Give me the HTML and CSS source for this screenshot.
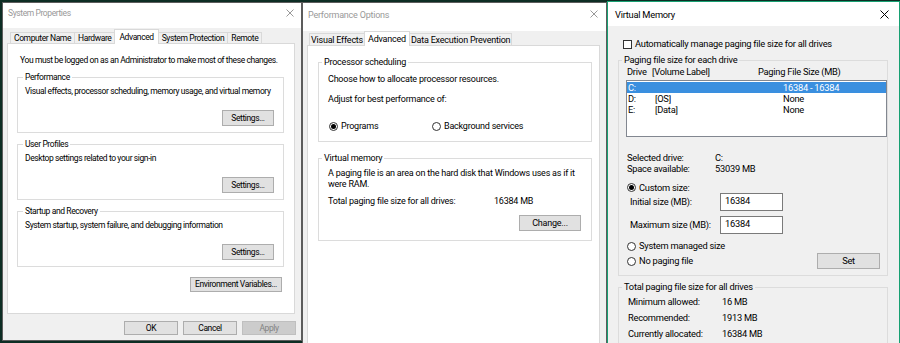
FILE: index.html
```html
<!DOCTYPE html>
<html lang="en">
<head>
    <meta charset="UTF-8">
    <title>System Properties - Virtual Memory</title>
    <link rel="stylesheet" href="styles.css">
</head>
<body>
<div class="desktop">

    <!-- System Properties -->
    <div class="window sysprops">
        <div class="titlebar">
            <span class="title">System Properties</span>
            <svg class="close" width="8" height="8" viewBox="0 0 8 8"><path d="M0.5 0.5L7.5 7.5M7.5 0.5L0.5 7.5"/></svg>
        </div>
        <div class="tabs">
            <span class="tab">Computer Name</span>
            <span class="tab">Hardware</span>
            <span class="tab active">Advanced</span>
            <span class="tab">System Protection</span>
            <span class="tab">Remote</span>
        </div>
        <div class="panel">
            <p class="notice">You must be logged on as an Administrator to make most of these changes.</p>
            <fieldset class="group">
                <legend>Performance</legend>
                <p>Visual effects, processor scheduling, memory usage, and virtual memory</p>
                <div class="actions"><button class="btn settings">Settings...</button></div>
            </fieldset>
            <fieldset class="group">
                <legend>User Profiles</legend>
                <p>Desktop settings related to your sign-in</p>
                <div class="actions"><button class="btn settings">Settings...</button></div>
            </fieldset>
            <fieldset class="group">
                <legend>Startup and Recovery</legend>
                <p>System startup, system failure, and debugging information</p>
                <div class="actions"><button class="btn settings">Settings...</button></div>
            </fieldset>
            <div class="actions env"><button class="btn env-btn">Environment Variables...</button></div>
        </div>
        <div class="footer">
            <button class="btn dlg">OK</button>
            <button class="btn dlg">Cancel</button>
            <button class="btn dlg" disabled>Apply</button>
        </div>
    </div>

    <!-- Performance Options -->
    <div class="window perfopts">
        <div class="titlebar">
            <span class="title">Performance Options</span>
            <svg class="close" width="8" height="8" viewBox="0 0 8 8"><path d="M0.5 0.5L7.5 7.5M7.5 0.5L0.5 7.5"/></svg>
        </div>
        <div class="tabs">
            <span class="tab">Visual Effects</span>
            <span class="tab active">Advanced</span>
            <span class="tab">Data Execution Prevention</span>
        </div>
        <div class="panel">
            <fieldset class="group sched">
                <legend>Processor scheduling</legend>
                <p>Choose how to allocate processor resources.</p>
                <p class="adjust">Adjust for best performance of:</p>
                <div class="radio-row">
                    <span class="option"><span class="radio checked"></span>Programs</span>
                    <span class="option"><span class="radio"></span>Background services</span>
                </div>
            </fieldset>
            <fieldset class="group vm">
                <legend>Virtual memory</legend>
                <p class="vm-text">A paging file is an area on the hard disk that Windows uses as if it were RAM.</p>
                <div class="vm-total">
                    <span>Total paging file size for all drives:</span>
                    <span>16384 MB</span>
                </div>
                <div class="actions"><button class="btn change">Change...</button></div>
            </fieldset>
        </div>
    </div>

    <!-- Virtual Memory -->
    <div class="window vmem active">
        <div class="titlebar">
            <span class="title">Virtual Memory</span>
            <svg class="close" width="9" height="9" viewBox="0 0 9 9"><path d="M0.5 0.5L8.5 8.5M8.5 0.5L0.5 8.5"/></svg>
        </div>
        <div class="vm-body">
            <div class="check-row"><span class="checkbox"></span>Automatically manage paging file size for all drives</div>

            <fieldset class="group drives">
                <legend>Paging file size for each drive</legend>
                <div class="drive-head">
                    <span>Drive</span>
                    <span>[Volume Label]</span>
                    <span>Paging File Size (MB)</span>
                </div>
                <div class="listbox">
                    <div class="drive-row selected"><span>C:</span><span></span><span>16384 - 16384</span></div>
                    <div class="drive-row"><span>D:</span><span>[OS]</span><span>None</span></div>
                    <div class="drive-row"><span>E:</span><span>[Data]</span><span>None</span></div>
                </div>
                <div class="info-grid">
                    <span>Selected drive:</span><span>C:</span>
                    <span>Space available:</span><span>53039 MB</span>
                </div>
                <div class="option custom"><span class="radio checked"></span>Custom size:</div>
                <div class="size-grid">
                    <label for="initSize">Initial size (MB):</label>
                    <input id="initSize" class="textbox" type="text" value="16384">
                    <label for="maxSize">Maximum size (MB):</label>
                    <input id="maxSize" class="textbox" type="text" value="16384">
                </div>
                <div class="option managed"><span class="radio"></span>System managed size</div>
                <div class="set-row">
                    <span class="option"><span class="radio"></span>No paging file</span>
                    <button class="btn set">Set</button>
                </div>
            </fieldset>

            <fieldset class="group totals">
                <legend>Total paging file size for all drives</legend>
                <div class="totals-grid">
                    <span>Minimum allowed:</span><span>16 MB</span>
                    <span>Recommended:</span><span>1913 MB</span>
                    <span>Currently allocated:</span><span>16384 MB</span>
                </div>
            </fieldset>
        </div>
    </div>

</div>
</body>
</html>
```

FILE: styles.css
```css
* {
    box-sizing: border-box;
}
body {
    margin: 0;
    font-family: Roboto, "Liberation Sans", Arial, sans-serif;
    font-size: 9px;
    line-height: 12px;
    color: #000;
}
p {
    margin: 0;
}
.desktop {
    display: flex;
    align-items: flex-start;
    height: 343px;
    overflow: hidden;
    background-color: #0d2d24;
}

/* windows */
.window {
    display: flex;
    flex-direction: column;
    background-color: #f0f0f0;
    border: 1px solid #5c5c5c;
}
.titlebar {
    display: flex;
    align-items: flex-start;
    background-color: #fff;
    flex-shrink: 0;
}
.title {
    color: #999;
}
.close {
    margin-left: auto;
    stroke: #999;
    stroke-width: 1;
    fill: none;
}
.window.active .title {
    color: #000;
}
.window.active .close {
    stroke: #000;
}

.sysprops {
    margin: 2px 0 0 2px;
    width: 300px;
    height: 339px;
    font-size: 8.5px;
    letter-spacing: -0.4px;
}
.sysprops .titlebar {
    height: 25px;
    padding: 0 7px 0 5px;
}
.sysprops .title {
    margin-top: 4px;
}
.sysprops .close {
    margin-top: 6px;
}

.perfopts {
    margin-top: 2px;
    width: 305px;
    height: 345px;
    font-size: 9px;
    letter-spacing: -0.22px;
}
.perfopts .titlebar {
    height: 28px;
    padding: 0 8px 0 5px;
}
.perfopts .title {
    margin-top: 6px;
}
.perfopts .close {
    margin-top: 7px;
}

.vmem {
    margin-top: 1px;
    width: 293px;
    height: 346px;
    border-color: #17a072;
    font-size: 9.3px;
    letter-spacing: -0.25px;
}
.vmem .titlebar {
    height: 24px;
    padding: 0 10px 0 7px;
}
.vmem .title {
    margin-top: 7px;
}
.vmem .close {
    margin-top: 8px;
}

/* tabs */
.tabs {
    display: flex;
    align-items: flex-end;
    flex-shrink: 0;
}
.tab {
    display: flex;
    align-items: center;
    padding: 0 3px;
    border: 1px solid #d9d9d9;
    border-bottom: none;
    background-color: #f0f0f0;
    margin-left: -1px;
    white-space: nowrap;
}
.tab.active {
    position: relative;
    z-index: 1;
    background-color: #fff;
    margin-bottom: -1px;
    padding: 0 4px;
}
.sysprops .tabs {
    height: 15px;
    padding-left: 8px;
}
.sysprops .tab {
    height: 11px;
}
.sysprops .tab.active {
    height: 15px;
}
.perfopts .tabs {
    height: 14px;
    padding-left: 7px;
}
.perfopts .tab {
    height: 12px;
    padding: 0 1px;
}
.perfopts .tab.active {
    height: 15px;
    padding: 0 3px;
}

.panel {
    background-color: #fff;
    border: 1px solid #d9d9d9;
}
.sysprops .panel {
    height: 271px;
    margin: 0 6px 0 4px;
    padding: 0 10px 0 9px;
}
.perfopts .panel {
    flex: 1;
    margin: 0 6px 0 4px;
    padding: 10px 7px 0 10px;
    border-bottom: none;
}

/* group boxes */
.group {
    margin: 0;
    min-width: 0;
    border: 1px solid #dcdcdc;
}
.group legend {
    padding: 0 2px;
    line-height: 12px;
}
.sysprops .group {
    margin-top: 5px;
    padding: 2px 9px 6px 7px;
}
.sysprops .group legend {
    margin-left: -2px;
}
.notice {
    margin: 10px 0 0 3px;
    white-space: nowrap;
}
.actions {
    display: flex;
    justify-content: flex-end;
}
.sysprops .group .actions {
    margin-top: 13px;
}
.actions.env {
    margin: 10px 2px 0 0;
}

/* buttons */
.btn {
    font: inherit;
    letter-spacing: inherit;
    color: #000;
    background-color: #e1e1e1;
    border: 1px solid #adadad;
    padding: 0;
    height: 16px;
    line-height: 14px;
    white-space: nowrap;
}
.btn:disabled {
    background-color: #cccccc;
    border-color: #bfbfbf;
    color: #838383;
}
.btn.settings {
    width: 52px;
}
.btn.env-btn {
    width: 92px;
    height: 15px;
    line-height: 13px;
}
.btn.dlg {
    width: 54px;
    height: 14px;
    line-height: 12px;
}
.btn.change {
    width: 62px;
}
.btn.set {
    width: 63px;
    margin-right: 7px;
}
.footer {
    flex: 1;
    display: flex;
    justify-content: flex-end;
    gap: 5px;
    padding: 7px 5px 0 0;
}

/* performance options */
.perfopts .group {
    padding: 5px 10px 9px 9px;
}
.perfopts .group legend {
    margin-left: -6px;
}
.adjust {
    margin-top: 8px;
}
.radio-row {
    display: grid;
    grid-template-columns: 103px auto;
    margin: 15px 0 0 1px;
}
.option {
    display: flex;
    align-items: center;
    gap: 3px;
}
.radio {
    width: 9px;
    height: 9px;
    border: 1px solid #333;
    border-radius: 50%;
    background-color: #fff;
    flex-shrink: 0;
}
.radio.checked::after {
    content: '';
    display: block;
    width: 5px;
    height: 5px;
    margin: 1px;
    border-radius: 50%;
    background-color: #000;
}
.perfopts .vm {
    margin-top: 10px;
    padding-top: 4px;
}
.vm-text {
    line-height: 11px;
}
.vm-total {
    display: grid;
    grid-template-columns: 166px auto;
    margin-top: 5px;
}
.vm .actions {
    margin-top: 8px;
}

/* virtual memory */
.vm-body {
    flex: 1;
    padding: 12px 11px 0 10px;
}
.check-row {
    display: flex;
    align-items: center;
    gap: 3px;
    padding-left: 5px;
}
.checkbox {
    width: 9px;
    height: 9px;
    border: 1px solid #333;
    background-color: #fff;
}
.vmem .group legend {
    margin-left: -4px;
}
.drives {
    margin-top: 4px;
    padding: 0 0 6px 7px;
}
.drive-head {
    display: grid;
    grid-template-columns: 25px 106px 1fr;
    padding-left: 1px;
}
.listbox {
    height: 57px;
    margin-top: 2px;
    padding-top: 1px;
    background-color: #fff;
    border: 1px solid #828790;
}
.drive-row {
    display: grid;
    grid-template-columns: 27px 128px 1fr;
    height: 11px;
    line-height: 11px;
    padding-left: 1px;
}
.drive-row.selected {
    background-color: #3a8fdf;
    color: #fff;
}
.info-grid {
    display: grid;
    grid-template-columns: 88px auto;
    line-height: 11px;
    margin-top: 15px;
    padding-left: 1px;
}
.option.custom {
    margin-top: 8px;
    padding-left: 1px;
    line-height: 11px;
}
.size-grid {
    display: grid;
    grid-template-columns: 90px 63px;
    grid-template-rows: 18px 18px;
    row-gap: 5px;
    align-items: center;
    padding-left: 4px;
}
.textbox {
    font: inherit;
    letter-spacing: inherit;
    width: 63px;
    height: 18px;
    padding: 0 0 3px 4px;
    border: 1px solid #7a7a7a;
    background-color: #fff;
}
.option.managed {
    margin-top: 6px;
    padding-left: 1px;
}
.set-row {
    display: flex;
    align-items: center;
    justify-content: space-between;
    margin-top: 1px;
    padding-left: 1px;
}
.totals {
    margin-top: 5px;
    padding: 3px 0 20px 9px;
}
.vmem .totals legend {
    margin-left: -6px;
}
.totals-grid {
    display: grid;
    grid-template-columns: 94px auto;
    row-gap: 4px;
}
```
